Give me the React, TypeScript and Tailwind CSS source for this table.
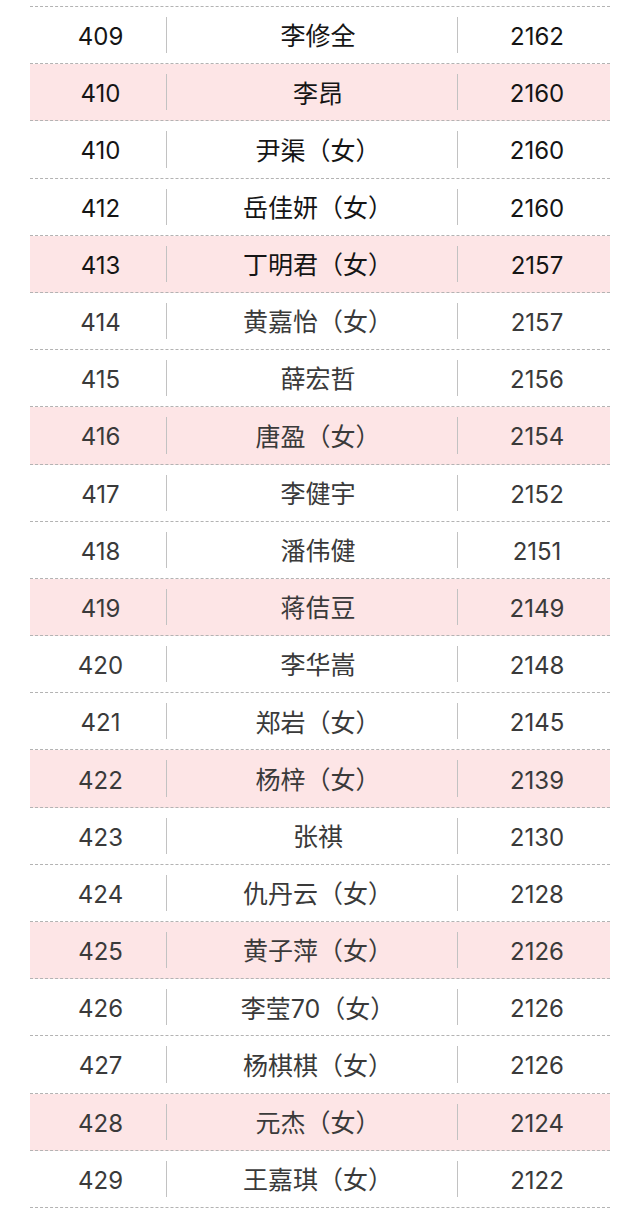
const rows: [string, string, string][] = [
  ["409", "李修全", "2162"],
  ["410", "李昂", "2160"],
  ["410", "尹渠（女）", "2160"],
  ["412", "岳佳妍（女）", "2160"],
  ["413", "丁明君（女）", "2157"],
  ["414", "黄嘉怡（女）", "2157"],
  ["415", "薛宏哲", "2156"],
  ["416", "唐盈（女）", "2154"],
  ["417", "李健宇", "2152"],
  ["418", "潘伟健", "2151"],
  ["419", "蒋佶豆", "2149"],
  ["420", "李华嵩", "2148"],
  ["421", "郑岩（女）", "2145"],
  ["422", "杨梓（女）", "2139"],
  ["423", "张祺", "2130"],
  ["424", "仇丹云（女）", "2128"],
  ["425", "黄子萍（女）", "2126"],
  ["426", "李莹70（女）", "2126"],
  ["427", "杨棋棋（女）", "2126"],
  ["428", "元杰（女）", "2124"],
  ["429", "王嘉琪（女）", "2122"],
];

export default function App() {
  return (
    <div
      className="w-[640px] h-[1211px] bg-white overflow-hidden"
      style={{ fontFamily: "Inter, 'Noto Sans CJK SC', sans-serif" }}
    >
      <div className="mx-[30px] mt-[6px] border-t border-dashed border-[#b3b3b3]">
        {rows.map(([rank, name, score], i) => {
          const pink = i % 3 === 1;
          const dark = i < 5;
          return (
            <div
              key={i}
              className={`flex h-[57.2px] border-b border-dashed border-[#b3b3b3] text-[24px] ${
                pink ? "bg-[#fde5e6]" : "bg-white"
              } ${dark ? "text-[#151515]" : "text-[#3a3a3a]"}`}
            >
              <div className="w-[136px] flex items-center justify-center pl-[5px] pt-[4px]">{rank}</div>
              <div className="w-px my-[10px] bg-[#c2c2c2]" />
              <div className="w-[290px] flex items-center justify-center pl-[12px] pt-[4px] text-[25px]">
                {name}
              </div>
              <div className="w-px my-[10px] bg-[#c2c2c2]" />
              <div className="flex-1 flex items-center justify-center pl-[6px] pt-[4px]">{score}</div>
            </div>
          );
        })}
      </div>
    </div>
  );
}
